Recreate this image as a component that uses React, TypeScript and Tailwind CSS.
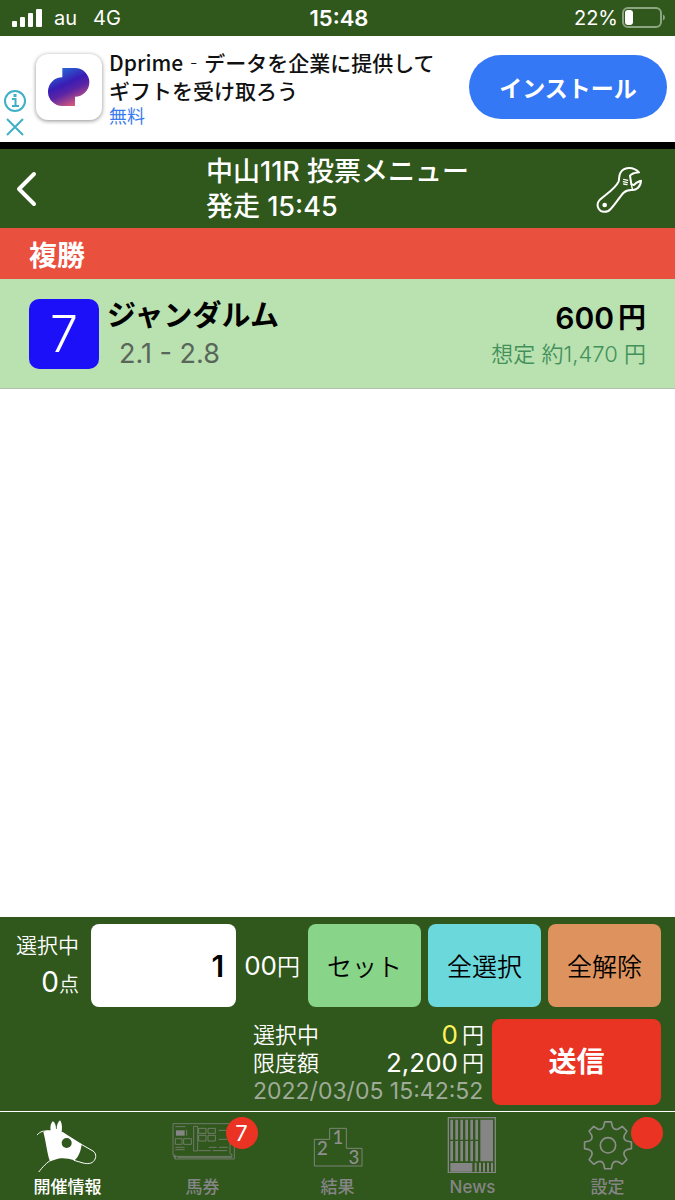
import React, { useState } from "react";

const GREEN_LINE = "#8a8f8a";

const SignalIcon = () => (
    <svg width="30" height="18" viewBox="0 0 30 18" fill="#fff" aria-hidden="true">
        <rect x="0" y="12" width="5" height="6" rx="1" />
        <rect x="8" y="8" width="5" height="10" rx="1" />
        <rect x="16" y="4" width="5" height="14" rx="1" />
        <rect x="24" y="0" width="6" height="18" rx="1" />
    </svg>
);

const BatteryIcon = () => (
    <svg width="44" height="22" viewBox="0 0 44 22" fill="none" aria-hidden="true">
        <rect x="1" y="1" width="38" height="19" rx="5" stroke="#8ba680" strokeWidth="2" />
        <rect x="3" y="3" width="8" height="15" rx="3" fill="#fff" />
        <path d="M41 7.500q2 1 2 3t-2 3z" fill="#8ba680" />
    </svg>
);

const DprimeLogo = () => (
    <svg width="42" height="38" viewBox="143 204 126 114" aria-hidden="true">
        <defs>
            <linearGradient id="dprime" x1="0.25" y1="0" x2="0.75" y2="1">
                <stop offset="0" stopColor="#2370d8" />
                <stop offset="0.4" stopColor="#3a1cb4" />
                <stop offset="0.6" stopColor="#5a25a4" />
                <stop offset="1" stopColor="#f06474" />
            </linearGradient>
        </defs>
        <path
            fill="url(#dprime)"
            d="M186 204H224A43 43 0 0 1 224 290V318H186A43 43 0 0 1 186 232Z"
        />
    </svg>
);

const WrenchIcon = () => (
    <svg
        width="48"
        height="49"
        viewBox="784 74 144 147"
        fill="none"
        stroke="#fff"
        strokeWidth="6"
        strokeLinejoin="round"
        strokeLinecap="round"
        aria-hidden="true"
    >
        <path d="M797 180C814 163 844 147 855 123C857 115 856 105 860 98C870 80 897 77 916 96C906 97 897 96 889 106L893 132L901 134C906 126 914 124 922 121C921 141 907 151 893 149C884 149 876 151 869 158C856 173 841 196 831 206C820 218 801 217 795 205C790 196 791 187 797 180Z" />
        <path d="M893 132L896 146M870 117l12 3M869 124l12 3M870 131l10 2" strokeWidth="4" />
        <circle cx="813" cy="194" r="7" fill="#fff" stroke="none" />
    </svg>
);

const HorseIcon = () => (
    <svg width="66" height="56" viewBox="103 36 198 168" fill="none" aria-hidden="true">
        <path
            fill="#fff"
            d="M128 81C135 76 142 75 150 76C148 64 151 53 157 49C163 53 166 62 166 72L168 72C168 61 172 51 178 46C184 53 185 68 183 80C190 82 194 86 200 90L243 117C241 137 234 155 222 166C203 160 187 158 172 161L148 169C139 145 136 110 128 81Z"
        />
        <circle cx="198" cy="114" r="15" fill="#30571c" />
        <path
            stroke="#fff"
            strokeWidth="3"
            strokeLinecap="round"
            d="M110 89C119 79 129 77 140 78M240 117L277 138C286 144 288 156 281 166C274 177 260 177 247 174L220 166M151 166C139 171 126 186 115 200"
        />
    </svg>
);

const TicketIcon = () => (
    <svg width="66" height="56" viewBox="508 36 198 168" fill="none" stroke="#7d837a" strokeWidth="2.500" aria-hidden="true">
        <path d="M517 56h171v90l6 3v5H523v8h178V92M517 56v94h6v12M523 154h-6M530 158h165" />
        <path d="M579 64h12v74h-12zM594 70h22v15h-22zM622 70h22v15h-22zM594 91h22v17h-22zM622 91h22v17h-22z" />
        <path d="M524 101h20v17h-20zM549 101h23v17h-23zM524 65h30M558 74v18M524 127h28M524 134h28M654 76h26M654 103h26M624 127h24M655 127h26M594 137h36M636 137h44" />
        <path d="M526 76h26v16h-26z" fill="#858585" stroke="none" />
    </svg>
);

const PodiumIcon = () => (
    <svg width="66" height="56" viewBox="133 36 198 168" fill="none" aria-hidden="true">
        <path d="M161 183V103h46V70h50v60h47v53z" stroke={GREEN_LINE} strokeWidth="2.500" />
        <g fill="#8f8f8f" fontFamily="Lato, sans-serif" fontSize="56" fontWeight="500" textAnchor="middle">
            <text x="185" y="150">2</text>
            <text x="232" y="117">1</text>
            <text x="280" y="177">3</text>
        </g>
    </svg>
);

const NewsIcon = () => (
    <svg width="66" height="56" viewBox="538 36 198 168" fill="none" aria-hidden="true">
        <rect x="563" y="38" width="141" height="165" stroke="#858585" strokeWidth="4" />
        <path
            stroke="#858585"
            strokeWidth="8"
            d="M573 44v60M588 44v60M603 44v60M618 44v60M633 44v60M648 44v60M573 108v61M588 108v61M603 108v61M618 108v61M633 108v61M648 108v61"
        />
        <path stroke="#858585" strokeWidth="6" d="M645 173v27M658 173v27M670 173v27M682 173v27M694 173v27" />
        <path fill="#858585" d="M659 44h38v125h-38zM569 174h66v26h-66z" />
    </svg>
);

// eight teeth around (322, 121)
const gearPath = () => {
    const point = (radius: number, deg: number) => {
        const rad = (deg * Math.PI) / 180;
        return `${(322 + radius * Math.sin(rad)).toFixed(1)} ${(121 - radius * Math.cos(rad)).toFixed(1)}`;
    };
    let d = `M${point(71, -8)}`;
    for (let a = 0; a < 360; a += 45) {
        d += `L${point(71, a - 8)}L${point(71, a + 8)}L${point(58, a + 13)}`;
        d += `Q${point(48, a + 22.5)} ${point(58, a + 32)}`;
    }
    return d + "Z";
};

const GearIcon = () => (
    <svg width="66" height="56" viewBox="223 36 198 168" fill="none" stroke={GREEN_LINE} strokeWidth="5" aria-hidden="true">
        <path d={gearPath()} strokeLinejoin="round" />
        <circle cx="322" cy="121" r="23" />
    </svg>
);

const tabs = [
    { label: "開催情報", icon: <HorseIcon />, active: true },
    { label: "馬券", icon: <TicketIcon />, badge: "7" },
    { label: "結果", icon: <PodiumIcon /> },
    { label: "News", icon: <NewsIcon /> },
    { label: "設定", icon: <GearIcon />, badge: "" },
];

const StatusBar = () => (
    <div className="grid h-9 grid-cols-3 items-center bg-[#30571c] pr-[9px] pl-3 text-[20px] text-white">
        <div className="flex items-center">
            <SignalIcon />
            <span className="ml-3">au</span>
            <span className="ml-4">4G</span>
        </div>
        <div className="text-center text-[22px] font-semibold">15:48</div>
        <div className="flex items-center justify-end gap-1">
            <span>22%</span>
            <BatteryIcon />
        </div>
    </div>
);

const AdBanner = () => (
    <div className="flex h-[106px] items-center bg-white pr-2 pb-1 pl-1">
        <div className="flex w-8 flex-col gap-1.5 self-end">
            <button type="button" aria-label="広告情報">
                <svg width="22" height="22" viewBox="0 0 22 22" fill="none" stroke="#3fb0c6" strokeWidth="2">
                    <circle cx="11" cy="11" r="10" />
                    <path d="M8 9h3.500v7M8 16h7" />
                    <path d="M9.500 5.500h3" strokeWidth="3" />
                </svg>
            </button>
            <button type="button" aria-label="広告を閉じる">
                <svg width="22" height="20" viewBox="0 0 22 20" fill="none" stroke="#3fb0c6" strokeWidth="2">
                    <path d="M3 1l16 16M19 1L3 17" />
                </svg>
            </button>
        </div>
        <div className="flex size-[66px] items-center justify-center rounded-xl bg-white shadow-[0_1px_4px_rgba(0,0,0,0.45)]">
            <DprimeLogo />
        </div>
        <div className="ml-[7px] flex-1 pt-1">
            <p className="text-[21px] leading-7 font-medium text-[#111]">
                <span className="font-['Noto_Sans_CJK_JP',sans-serif] leading-none">Dprime‐</span>
                データを企業に提供して
                <br />
                ギフトを受け取ろう
            </p>
            <p className="text-[18px] leading-[22px] text-[#3b7bf0]">無料</p>
        </div>
        <button
            type="button"
            className="h-16 w-[198px] rounded-full bg-[#3478f6] font-['Noto_Sans_CJK_JP',sans-serif] text-[23px] font-bold text-white"
        >
            インストール
        </button>
    </div>
);

const App: React.FC = () => {
    const [amount, setAmount] = useState("1");

    return (
        <div className="flex min-h-screen flex-col bg-white font-['Inter','Noto_Sans_CJK_JP',sans-serif]">
            <StatusBar />
            <AdBanner />
            <div className="h-[7px] bg-black" />

            <header className="grid grid-cols-[64px_1fr_64px] items-center bg-[#30571c] pt-[5px] pb-1 text-white">
                <button type="button" aria-label="戻る" className="pl-4">
                    <svg width="22" height="36" viewBox="0 0 22 36" fill="none" stroke="#fff" strokeWidth="4" strokeLinecap="round" strokeLinejoin="round">
                        <path d="M18 3L3 18l15 15" />
                    </svg>
                </button>
                <h1 className="mx-auto text-[27px] leading-[35px] font-medium">
                    中山11R 投票メニュー
                    <br />
                    発走 15:45
                </h1>
                <button type="button" aria-label="ツール" className="-ml-4">
                    <WrenchIcon />
                </button>
            </header>

            <h2 className="bg-[#e9503e] px-[29px] pt-1.5 text-[28px] leading-[45px] font-bold text-white">複勝</h2>

            <main className="flex-1">
                <div className="flex items-center border-b border-[#b5bfb0] bg-[#bae1b0] px-[29px] pt-[19px] pb-[18px]">
                    <div className="flex size-[70px] items-center justify-center rounded-[10px] bg-[#1c10f8] text-[50px] font-[350] text-white">
                        7
                    </div>
                    <div className="ml-2 flex-1">
                        <p className="text-[29px] leading-9 font-bold text-black">ジャンダルム</p>
                        <p className="pt-1 pl-3 text-[27px] leading-8 text-[#59665a]">2.1 - 2.8</p>
                    </div>
                    <div className="text-right">
                        <p className="flex items-center justify-end gap-1 text-[30px] leading-10 font-semibold text-black">
                            600<span className="text-[28px]">円</span>
                        </p>
                        <p className="text-[22px] leading-8 font-[350] text-[#43915a]">想定 約1,470 円</p>
                    </div>
                </div>
            </main>

            <section className="bg-[#30571c] pt-[7px] pr-3.5 pb-1.5 pl-3.5 font-[350] text-white">
                <div className="flex h-[83px] items-center">
                    <div className="w-[65px] text-right">
                        <p className="text-[21px] leading-9 whitespace-nowrap">選択中</p>
                        <p className="text-[20px] leading-9">
                            <span className="text-[28px] font-normal">0</span>点
                        </p>
                    </div>
                    <input
                        type="text"
                        inputMode="numeric"
                        aria-label="金額"
                        value={amount}
                        onChange={(e) => setAmount(e.target.value)}
                        className="ml-3 h-full w-[145px] min-w-0 flex-1 rounded-lg bg-white pr-3 text-right text-[30px] font-semibold text-black"
                    />
                    <span className="mx-2 text-[26px] whitespace-nowrap">
                        <span className="font-normal">00</span>
                        <span className="text-[23px]">円</span>
                    </span>
                    <div className="flex h-full gap-[7px] text-[25px] text-black">
                        <button type="button" className="w-[113px] rounded-lg bg-[#88d488] pt-1">セット</button>
                        <button type="button" className="w-[113px] rounded-lg bg-[#6bd8dc] pt-1">全選択</button>
                        <button type="button" className="w-[113px] rounded-lg bg-[#de925d] pt-1">全解除</button>
                    </div>
                </div>
                <div className="mt-3 flex h-[86px] items-center justify-end gap-2">
                    <div className="w-[231px] pt-0.5 text-[22px] leading-7">
                        <div className="flex justify-between">
                            <span>選択中</span>
                            <span className="flex gap-1">
                                <span className="text-[26px] font-normal text-[#fdf25c]">0</span>円
                            </span>
                        </div>
                        <div className="flex justify-between">
                            <span>限度額</span>
                            <span className="flex gap-1">
                                <span className="text-[26px] font-normal">2,200</span>円
                            </span>
                        </div>
                        <p className="text-[23px] font-normal whitespace-nowrap text-[#9eab98]">2022/03/05 15:42:52</p>
                    </div>
                    <button type="button" className="h-full w-[169px] rounded-lg bg-[#e93323] text-[28px] font-bold">
                        送信
                    </button>
                </div>
            </section>

            <nav className="grid grid-cols-5 border-t border-white bg-[#30571c] pt-[5px] pb-px">
                {tabs.map((tab) => (
                    <button
                        key={tab.label}
                        type="button"
                        className={`flex flex-col items-center gap-0.5 text-[17px] leading-6 font-medium ${tab.active ? "text-white" : "text-[#858585]"}`}
                    >
                        <span className="relative">
                            {tab.icon}
                            {tab.badge !== undefined && (
                                <span className="absolute top-0 left-14 flex size-8 items-center justify-center rounded-full bg-[#ea3323] text-[22px] font-normal text-white">
                                    {tab.badge}
                                </span>
                            )}
                        </span>
                        {tab.label}
                    </button>
                ))}
            </nav>
        </div>
    );
};

export default App;
